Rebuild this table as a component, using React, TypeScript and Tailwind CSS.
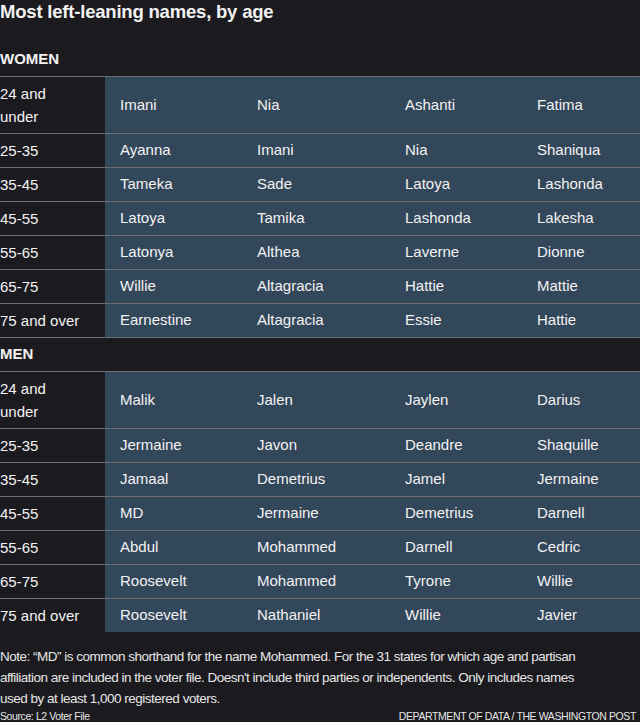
import React from "react";

const women: [string, string[]][] = [
  ["24 and under", ["Imani", "Nia", "Ashanti", "Fatima"]],
  ["25-35", ["Ayanna", "Imani", "Nia", "Shaniqua"]],
  ["35-45", ["Tameka", "Sade", "Latoya", "Lashonda"]],
  ["45-55", ["Latoya", "Tamika", "Lashonda", "Lakesha"]],
  ["55-65", ["Latonya", "Althea", "Laverne", "Dionne"]],
  ["65-75", ["Willie", "Altagracia", "Hattie", "Mattie"]],
  ["75 and over", ["Earnestine", "Altagracia", "Essie", "Hattie"]],
];
const men: [string, string[]][] = [
  ["24 and under", ["Malik", "Jalen", "Jaylen", "Darius"]],
  ["25-35", ["Jermaine", "Javon", "Deandre", "Shaquille"]],
  ["35-45", ["Jamaal", "Demetrius", "Jamel", "Jermaine"]],
  ["45-55", ["MD", "Jermaine", "Demetrius", "Darnell"]],
  ["55-65", ["Abdul", "Mohammed", "Darnell", "Cedric"]],
  ["65-75", ["Roosevelt", "Mohammed", "Tyrone", "Willie"]],
  ["75 and over", ["Roosevelt", "Nathaniel", "Willie", "Javier"]],
];

function Section({ title, rows, topLine }: { title: string; rows: [string, string[]][]; topLine?: boolean }) {
  return (
    <div>
      <div
        className={`flex items-center font-bold text-[15px] ${
          topLine ? "h-[34px] border-t border-[#6e6e72]" : "h-[34px] pt-[1px]"
        }`}
      >
        {title}
      </div>
      {rows.map(([age, names], i) => {
        const tall = age === "24 and under";
        return (
          <div
            key={i}
            className={`flex border-t border-[#6e6e72] ${tall ? "h-[57px]" : "h-[34px]"}`}
          >
            <div className="w-[105px] shrink-0 flex items-center text-[15px] leading-[23px]">
              {tall ? <span className="w-[80px]">24 and under</span> : age}
            </div>
            <div className="flex-1 flex bg-[#33475a] text-[15px]">
              <div className="w-[137px] shrink-0 pl-[15px] flex items-center">{names[0]}</div>
              <div className="w-[148px] shrink-0 pl-[15px] flex items-center">{names[1]}</div>
              <div className="w-[132px] shrink-0 pl-[15px] flex items-center">{names[2]}</div>
              <div className="flex-1 pl-[15px] flex items-center">{names[3]}</div>
            </div>
          </div>
        );
      })}
    </div>
  );
}

export default function App() {
  return (
    <div
      className="w-[640px] h-[722px] bg-[#1b1a1f] text-[#f2f2f2] overflow-hidden"
      style={{ fontFamily: '"Liberation Sans", Arial, sans-serif' }}
    >
      <div className="h-[42px] text-[18.5px] font-bold leading-[24px] tracking-[-0.2px]">
        Most left-leaning names, by age
      </div>
      <Section title="WOMEN" rows={women} />
      <Section title="MEN" rows={men} topLine />
      <div className="mt-[14px] text-[13.5px] leading-[21px] text-[#e6e6e6] tracking-[-0.5px]">
        Note: “MD” is common shorthand for the name Mohammed. For the 31 states for which age and partisan
        <br />
        affiliation are included in the voter file. Doesn't include third parties or independents. Only includes names
        <br />
        used by at least 1,000 registered voters.
      </div>
      <div className="flex justify-between text-[10.5px] leading-[14px] text-[#e6e6e6] tracking-[-0.4px] pr-[4px]">
        <span>Source: L2 Voter File</span>
        <span>DEPARTMENT OF DATA / THE WASHINGTON POST</span>
      </div>
    </div>
  );
}
